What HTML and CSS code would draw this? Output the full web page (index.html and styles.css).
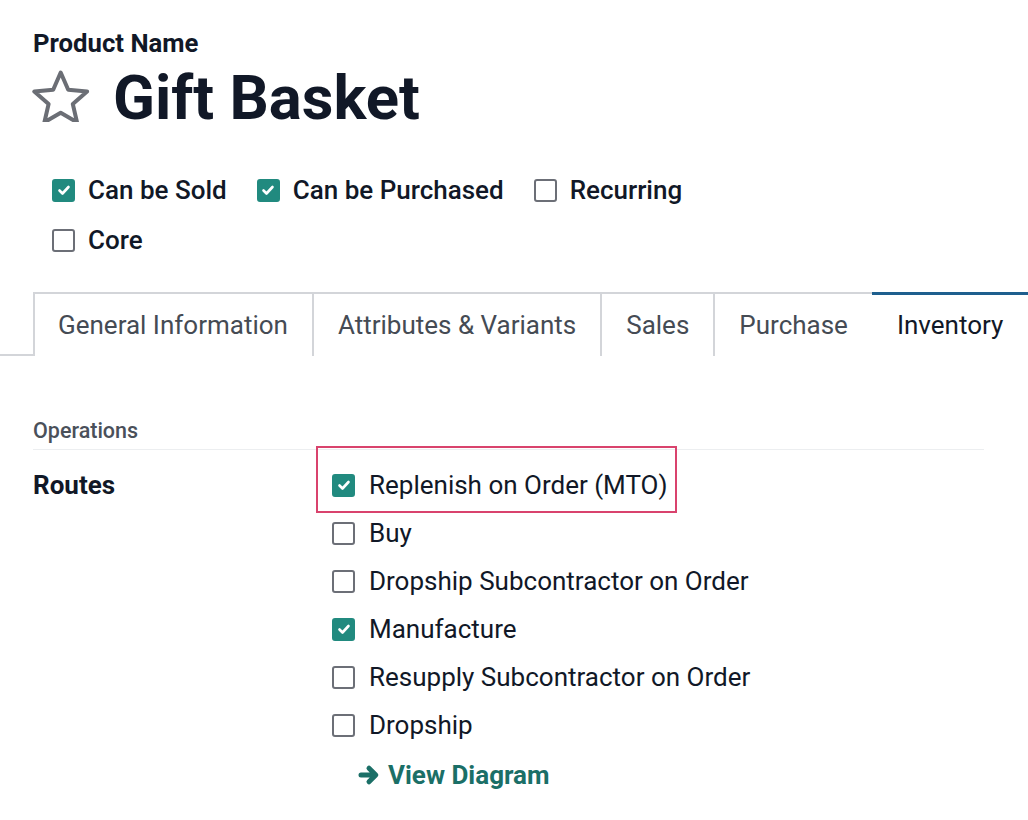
FILE: index.html
```html
<!DOCTYPE html>
<html>
<head>
<meta charset="utf-8">
<link rel="stylesheet" href="styles.css">
</head>
<body>
<div class="sheet">
  <div class="title-block">
    <div class="title-label">Product Name</div>
    <div class="name-row">
      <svg class="star" width="60" height="60" viewBox="0 0 60 60">
        <polygon points="30.7,10.5 38.2,27.7 57.1,29.5 42.8,42 47,60.3 30.7,50.8 14.4,60.3 18.6,42 4.3,29.5 23.2,27.7" fill="none" stroke="#6b6e75" stroke-width="4" stroke-linejoin="round"/>
      </svg>
      <h1 class="name">Gift Basket</h1>
    </div>
  </div>

  <div class="options">
    <label class="opt"><span class="cb on"><svg viewBox="0 0 22 22" width="22" height="22"><path d="M6.5 11.5l3 3 6-6.5" fill="none" stroke="#fff" stroke-width="2.6" stroke-linecap="round" stroke-linejoin="round"/></svg></span>Can be Sold</label>
    <label class="opt"><span class="cb on"><svg viewBox="0 0 22 22" width="22" height="22"><path d="M6.5 11.5l3 3 6-6.5" fill="none" stroke="#fff" stroke-width="2.6" stroke-linecap="round" stroke-linejoin="round"/></svg></span>Can be Purchased</label>
    <label class="opt"><span class="cb"></span>Recurring</label>
    <label class="opt"><span class="cb"></span>Core</label>
  </div>

  <div class="tabs">
    <div class="tab">General Information</div>
    <div class="tab">Attributes &amp; Variants</div>
    <div class="tab">Sales</div>
    <div class="tab">Purchase</div>
    <div class="tab active">Inventory</div>
  </div>

  <div class="pane">
    <div class="group-title">Operations</div>
    <div class="field-row">
      <div class="field-label">Routes</div>
      <div class="field-value">
        <div class="route highlighted"><span class="cb on"><svg viewBox="0 0 22 22" width="22" height="22"><path d="M6.5 11.5l3 3 6-6.5" fill="none" stroke="#fff" stroke-width="2.6" stroke-linecap="round" stroke-linejoin="round"/></svg></span>Replenish on Order (MTO)</div>
        <div class="route"><span class="cb"></span>Buy</div>
        <div class="route"><span class="cb"></span>Dropship Subcontractor on Order</div>
        <div class="route"><span class="cb on"><svg viewBox="0 0 22 22" width="22" height="22"><path d="M6.5 11.5l3 3 6-6.5" fill="none" stroke="#fff" stroke-width="2.6" stroke-linecap="round" stroke-linejoin="round"/></svg></span>Manufacture</div>
        <div class="route"><span class="cb"></span>Resupply Subcontractor on Order</div>
        <div class="route"><span class="cb"></span>Dropship</div>
        <a class="diagram"><svg class="arrow" width="22" height="22" viewBox="0 0 22 22"><path d="M3 11h14M11 4.2l6.8 6.8-6.8 6.8" fill="none" stroke="#1b6f67" stroke-width="5" stroke-linecap="round" stroke-linejoin="round"/></svg>View Diagram</a>
      </div>
    </div>
  </div>
</div>
</body>
</html>
```

FILE: styles.css
```css
html, body {
  margin: 0;
  padding: 0;
  background: #ffffff;
}
body {
  font-family: Roboto, "Noto Sans", sans-serif;
  color: #111827;
  width: 1028px;
  overflow: hidden;
}
.sheet {
  padding-top: 28px;
}
.title-block {
  padding-left: 33px;
}
.title-label {
  font-size: 25.7px;
  font-weight: 700;
  line-height: 30px;
}
.name-row {
  display: flex;
  align-items: flex-start;
  gap: 23px;
  margin-top: 4px;
}
.star {
  margin-left: -3px;
  flex: none;
}
.name {
  margin: 0;
  font-size: 61.6px;
  font-weight: 700;
  line-height: 72px;
  letter-spacing: 0;
}
.options {
  display: flex;
  flex-wrap: wrap;
  width: 680px;
  padding-left: 52px;
  margin-top: 38px;
  column-gap: 30px;
  row-gap: 14px;
}
.opt {
  display: flex;
  align-items: center;
  gap: 13px;
  font-size: 26px;
  font-weight: 500;
  line-height: 36px;
  white-space: nowrap;
}
.cb {
  flex: none;
  box-sizing: border-box;
  width: 23px;
  height: 23px;
  border: 2px solid #6c6f77;
  border-radius: 3px;
  display: flex;
  align-items: center;
  justify-content: center;
}
.cb.on {
  background: #218a7f;
  border-color: #218a7f;
}
.cb svg {
  flex: none;
}
.tabs {
  display: flex;
  margin-top: 34px;
  padding-left: 33px;
  border-bottom: 2px solid #d3d5d9;
  height: 62px;
}
.tab {
  flex: none;
  box-sizing: border-box;
  height: 64px;
  padding: 0 24px 1px;
  display: flex;
  align-items: center;
  font-size: 26px;
  color: #454b54;
  border: 2px solid #d3d5d9;
  border-bottom: none;
  margin-right: -2px;
  background: #fff;
  white-space: nowrap;
}
.tab:first-child {
  padding-left: 23px;
}
.tab.active {
  color: #111827;
  border: none;
  border-top: 3px solid #1e5f8e;
  margin-right: 0;
  flex: 1;
  height: 64px;
  padding-left: 25px;
  padding-bottom: 2px;
}
.pane {
  padding: 59px 44px 0 33px;
}
.group-title {
  font-size: 21.5px;
  font-weight: 500;
  color: #4a505a;
  line-height: 32px;
  padding-bottom: 2px;
  border-bottom: 1px solid #eceef0;
}
.field-row {
  display: flex;
  margin-top: 11px;
}
.field-label {
  width: 299px;
  flex: none;
  font-size: 26px;
  font-weight: 700;
  line-height: 48px;
}
.field-value {
  display: flex;
  flex-direction: column;
  align-items: flex-start;
}
.route {
  display: flex;
  align-items: center;
  gap: 14px;
  font-size: 26px;
  line-height: 48px;
  height: 48px;
  white-space: nowrap;
}
.highlighted {
  position: relative;
}
.highlighted::before {
  content: "";
  position: absolute;
  left: -16px;
  right: -9px;
  top: -15px;
  bottom: -4px;
  border: 2.5px solid #d9436d;
}
.diagram {
  display: flex;
  align-items: center;
  gap: 8px;
  margin-left: 26px;
  margin-top: 2px;
  font-size: 26px;
  font-weight: 700;
  color: #1b6f67;
  line-height: 48px;
}
.arrow {
  flex: none;
}
```
